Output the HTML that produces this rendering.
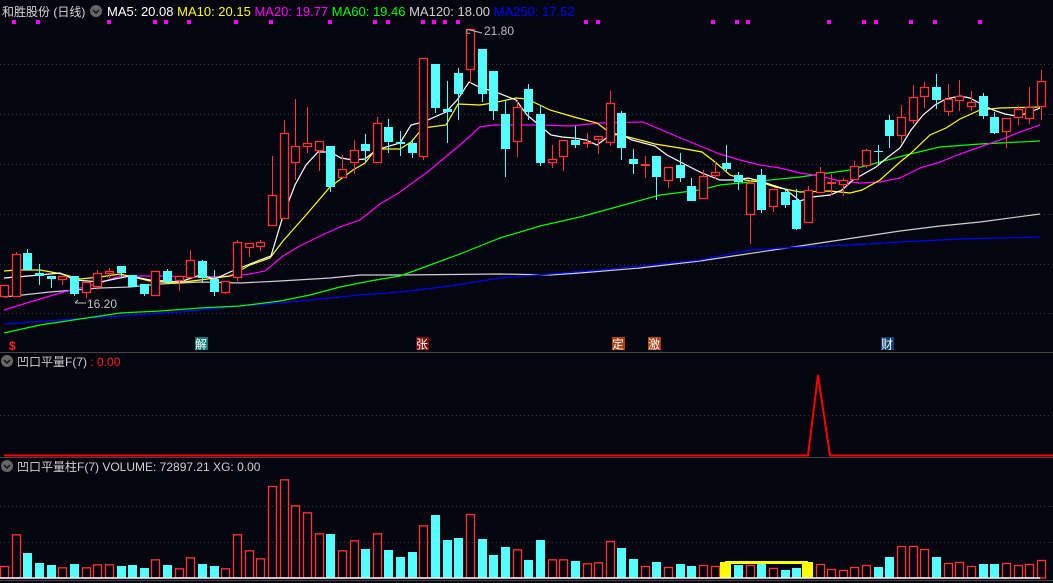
<!DOCTYPE html>
<html><head><meta charset="utf-8"><style>
html,body{margin:0;padding:0;background:#05050f;width:1053px;height:583px;overflow:hidden}
svg{display:block}
text{font-family:"Liberation Sans","Noto Sans CJK SC",sans-serif}
</style></head><body>
<svg id="s" width="1053" height="583" xmlns="http://www.w3.org/2000/svg">
<rect width="1053" height="583" fill="#05050f"/>
<g id="grid" stroke="#3a3a3a" stroke-dasharray="1,3" stroke-width="1">
<line x1="0" y1="64.5" x2="1053" y2="64.5"/><line x1="0" y1="114.5" x2="1053" y2="114.5"/>
<line x1="0" y1="164.5" x2="1053" y2="164.5"/><line x1="0" y1="214.5" x2="1053" y2="214.5"/>
<line x1="0" y1="264.5" x2="1053" y2="264.5"/><line x1="0" y1="313.5" x2="1053" y2="313.5"/>
<line x1="0" y1="415.5" x2="1053" y2="415.5"/>
<line x1="0" y1="506.5" x2="1053" y2="506.5"/><line x1="0" y1="542.5" x2="1053" y2="542.5"/>
</g>
<line x1="0" y1="352.5" x2="1053" y2="352.5" stroke="#444" />
<line x1="0" y1="457.5" x2="1053" y2="457.5" stroke="#444" />
<line x1="0" y1="580.5" x2="1053" y2="580.5" stroke="#444" />
<g id="main"></g>
<text x="2" y="16" font-size="12" fill="#d8d8d8">和胜股份 (日线)</text>
<circle cx="96" cy="11" r="6" fill="#666"/><path d="M93 10l3 3 3-3" stroke="#111" stroke-width="1.5" fill="none"/>
<text x="107" y="16" font-size="13"><tspan fill="#ffffff">MA5: 20.08 </tspan><tspan fill="#ffff00">MA10: 20.15 </tspan><tspan fill="#ff00ff">MA20: 19.77 </tspan><tspan fill="#00ff00">MA60: 19.46 </tspan><tspan fill="#d0d0d0">MA120: 18.00 </tspan><tspan fill="#0000ff">MA250: 17.52</tspan></text>
<text x="484" y="35" font-size="12" fill="#c0c0c0">21.80</text>
<path d="M470 30 l12 3" stroke="#c0c0c0" fill="none"/><text x="466" y="34" font-size="9" fill="#c0c0c0">c</text>
<text x="87" y="308" font-size="12" fill="#c0c0c0">16.20</text>
<path d="M75 303 h11 M75 303 l3 -3" stroke="#c0c0c0" fill="none"/>
<text x="9" y="350" font-size="12" font-weight="bold" fill="#ff2020">$</text>
<rect x="195" y="337" width="13" height="13" fill="#107878"/><text x="195" y="348.5" font-size="12" fill="#fff">解</text>
<rect x="416" y="337" width="13" height="13" fill="#7a0a0a"/><text x="416" y="348.5" font-size="12" fill="#fff">张</text>
<rect x="612" y="337" width="13" height="13" fill="#b04010"/><text x="612" y="348.5" font-size="12" fill="#fff">定</text>
<rect x="648" y="337" width="13" height="13" fill="#b04010"/><text x="648" y="348.5" font-size="12" fill="#fff">激</text>
<rect x="881" y="337" width="13" height="13" fill="#104070"/><text x="881" y="348.5" font-size="12" fill="#fff">财</text>
<circle cx="7" cy="361" r="6" fill="#666"/><path d="M4 360l3 3 3-3" stroke="#111" stroke-width="1.5" fill="none"/>
<text x="17" y="366" font-size="12" fill="#d0d0d0">凹口平量F(7) <tspan fill="#ff2020">: 0.00</tspan></text>
<path d="M4 455.5 H808 L818 375 L830 455.5 H1053" stroke="#ff0000" stroke-width="2" fill="none"/>
<circle cx="7" cy="466" r="6" fill="#666"/><path d="M4 465l3 3 3-3" stroke="#111" stroke-width="1.5" fill="none"/>
<text x="17" y="471" font-size="12" fill="#d0d0d0">凹口平量柱F(7) VOLUME: 72897.21 XG: 0.00</text>
<g id="vol"></g>
<line x1="0" y1="578" x2="1040" y2="578" stroke="#fff" stroke-width="1.5"/>
</svg>
<script>
var NS="http://www.w3.org/2000/svg";
function el(p,t,a){var e=document.createElementNS(NS,t);for(var k in a)e.setAttribute(k,a[k]);p.appendChild(e);return e;}
var C=[
['r',285,297,285,297],['r',254,297,252,297],['c',253,270,249,270],['c',273,276,264,285],['c',276,279,276,288],
['r',276,280,276,285],['c',276,294,276,296],['r',282,293,282,298],['r',273,287,270,290],['r',271,274,268,278],
['c',266,273,266,278],['c',275,287,275,287],['c',284,294,284,296],['r',271,296,271,296],['c',271,282,269,282],
['r',276,281,276,291],['r',260,278,250,278],['c',261,278,260,283],['c',279,292,270,296],['r',281,293,281,294],
['r',242,278,240,281],['r',243,248,243,257],['r',242,247,240,251],['r',195,226,156,226],['r',133,219,120,219],
['r',146,163,99,180],['r',143,147,107,153],['r',141,151,141,171],['c',146,187,146,192],['r',169,178,155,178],
['r',150,163,140,174],['c',144,151,134,163],['r',123,163,117,163],['c',127,142,119,153],['c',142,144,131,156],
['c',143,153,139,158],['r',58,157,58,160],['c',64,108,64,113],['c',109,112,81,143],['c',73,94,68,120],
['r',29,70,29,83],['c',49,94,49,102],['c',71,111,71,120],['c',114,149,100,177],['r',107,142,100,157],
['c',89,112,84,120],['c',114,163,105,166],['r',159,163,145,168],['r',140,157,140,171],['c',140,145,126,148],
['r',142,143,133,148],['r',136,140,136,154],['r',103,143,91,146],['c',113,148,111,160],['c',159,164,149,174],
['r',164,165,156,178],['c',156,177,156,200],['r',167,181,167,188],['c',165,178,153,182],['c',186,201,178,201],
['r',176,199,170,199],['r',172,176,162,179],['c',163,169,145,172],['c',175,182,172,190],['r',183,215,180,244],
['c',175,210,169,213],['r',189,207,189,212],['c',192,205,189,208],['c',200,229,189,230],['r',190,223,186,223],
['r',172,193,167,193],['r',182,184,174,195],['r',180,185,178,196],['r',166,180,161,180],['r',150,166,149,168],
['c',151,152,145,164],['c',120,136,115,148],['r',117,136,105,143],['r',97,121,85,124],['r',87,97,82,108],
['c',87,100,74,109],['r',99,112,84,116],['r',96,101,80,111],['r',102,107,91,111],['c',96,116,93,119],
['c',117,133,112,134],['r',118,132,118,148],['r',109,118,106,125],['r',107,119,87,124],['r',81,107,70,120]];
var V=[288,193,249,279,285,292,282,292,283,283,288,285,294,268,285,295,262,282,288,295,193,241,265,48,28,106,127,190,192,241,211,237,190,240,261,246,166,135,210,204,132,207,255,231,238,270,210,268,268,273,280,277].map(function(v){return 470+v/3;});
V=V.concat([541,548,559,566,562,567,564,566,565,566,566,565,565,564,568,570,568,568,564,569,570,567,565,567,557,546,546,549,557,563,562,566,564,564,563,565,564,560]);
var m=document.getElementById('main'),vg=document.getElementById('vol');
var R="#ff3434",CY="#54ffff";
function X(i){return 4+11.65*i;}
var MA=[
["#d0d0d0",[[4,297],[50,292],[100,288],[130,287],[160,284],[200,282],[240,283],[280,281],[330,278],[360,275],[400,275],[500,274],[550,275],[580,273],[640,268],[700,261],[740,255],[780,249],[820,243],[860,237],[900,231],[940,226],[980,222],[1040,214]]],
["#0000ff",[[4,324],[60,320],[120,316],[180,312],[240,306],[280,303],[330,298],[360,295],[400,292],[450,286],[500,278],[550,274],[600,270],[650,265],[700,260],[750,250],[800,247],[850,245],[900,242],[960,239],[1040,237]]],
["#00ff00",[[4,333],[40,325],[80,319],[120,313],[160,311],[200,308],[240,306],[280,301],[310,295],[340,287],[370,281],[400,276],[430,265],[460,254],[500,238],[540,226],[580,217],[620,206],[660,195],[700,190],[720,185],[760,181],[800,177],[850,170],[880,162],[910,154],[940,147],[980,144],[1040,141]]],
["#ff00ff",[[4,310],[30,302],[60,293],[100,283],[120,276],[160,276],[200,277],[230,276],[250,274],[265,271],[283,256],[300,246],[320,236],[340,227],[360,220],[380,204],[400,192],[430,170],[460,145],[480,127],[493,125],[540,125],[570,126],[600,123],[643,122],[683,139],[705,148],[720,154],[740,160],[760,165],[780,168],[800,173],[820,176],[840,181],[860,183],[880,182],[900,178],[920,168],[940,162],[960,154],[980,147],[1000,140],[1020,132],[1040,125]]],
["#ffff00",[[4,271],[15,270],[40,270],[62,274],[80,279],[100,277],[120,274],[150,281],[175,283],[200,280],[230,276],[250,265],[270,258],[283,241],[306,215],[330,187],[353,170],[365,163],[376,149],[400,149],[411,142],[423,128],[446,125],[458,104],[480,105],[493,103],[516,98],[527,99],[550,110],[574,117],[597,123],[609,132],[632,138],[655,144],[680,148],[702,152],[715,162],[730,175],[745,180],[760,182],[775,187],[800,192],[830,191],[850,193],[862,190],[880,180],[900,162],[910,154],[930,135],[946,128],[960,119],[980,110],[1000,108],[1040,107]]],
["#ffffff",[[4,278],[40,275],[60,273],[75,280],[100,282],[130,276],[150,280],[180,282],[200,275],[215,279],[230,272],[250,264],[260,260],[271,256],[283,216],[295,185],[306,165],[318,152],[330,152],[341,158],[353,160],[365,159],[376,150],[400,143],[411,125],[423,122],[446,112],[458,99],[469,82],[481,88],[493,91],[516,100],[527,115],[539,125],[551,135],[562,137],[574,138],[586,140],[597,145],[609,136],[620,134],[632,140],[655,146],[667,155],[690,167],[702,173],[720,180],[737,180],[748,178],[760,181],[772,185],[785,189],[800,201],[812,197],[830,195],[842,190],[853,180],[876,167],[888,157],[900,148],[911,130],[923,115],[935,105],[946,99],[960,96],[970,98],[981,104],[993,110],[1005,114],[1016,116],[1028,113],[1040,108]]]];
MA.forEach(function(a){el(m,'polyline',{points:a[1].map(function(p){return p.join(',');}).join(' '),fill:'none',stroke:a[0],'stroke-width':1.2});});
C.forEach(function(c,i){var x=Math.round(X(i)),col=c[0]=='r'?R:CY;
 el(m,'line',{x1:x+0.5,y1:c[3],x2:x+0.5,y2:c[4],stroke:col,'stroke-width':1});
 var h=Math.max(1,c[2]-c[1]);
 if(c[0]=='r'){if(h<=2)el(m,'rect',{x:x-4,y:c[1],width:9,height:2,fill:R});else el(m,'rect',{x:x-3.5,y:c[1]+0.5,width:8,height:h-1,fill:'#05050f',stroke:R,'stroke-width':1.3});}
 else el(m,'rect',{x:x-4,y:c[1],width:9,height:h,fill:CY});
});
C.forEach(function(c,i){if(!V[i])return;var x=Math.round(X(i)),t=V[i],h=578-t;
 if(c[0]=='r')el(vg,'rect',{x:x-3.5,y:t+0.5,width:8,height:h-0.5,fill:'none',stroke:R,'stroke-width':1.3});
 else el(vg,'rect',{x:x-4,y:t,width:9,height:h,fill:CY});});
[14,38,109,155,166,189,236,271,330,375,388,423,434,445,458,586,598,713,737,748,829,864,876,911,935,980].forEach(function(x){el(m,'rect',{x:x-2,y:20,width:4,height:4,fill:'#ff00ff'});});
el(vg,'rect',{x:725,y:561,width:83,height:3,fill:'#ffff00'});
el(vg,'rect',{x:720,y:562,width:11,height:16,fill:'#ffff00'});
el(vg,'rect',{x:802,y:562,width:11,height:16,fill:'#ffff00'});
</script>
</body></html>
